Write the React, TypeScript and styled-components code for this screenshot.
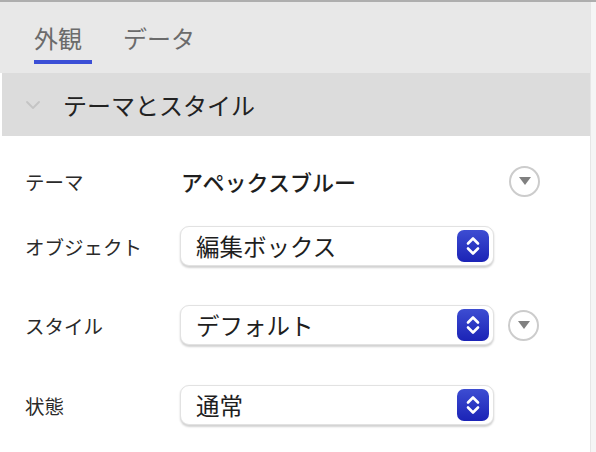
import styled, { createGlobalStyle } from 'styled-components';

const GlobalStyle = createGlobalStyle`
  html, body {
    margin: 0;
    padding: 0;
    background: #ffffff;
  }
  body {
    font-family: "Noto Sans CJK JP", "Noto Sans", sans-serif;
  }
`;

const Page = styled.div`
  display: flex;
  width: 596px;
  height: 452px;
  overflow: hidden;
  border-top: 2px solid #aeaeae;
  box-sizing: border-box;
`;

const Panel = styled.div`
  display: flex;
  flex-direction: column;
  width: 590px;
  background: #ffffff;
`;

const ScrollStrip = styled.div`
  width: 6px;
  border-left: 1px solid #e6e6e6;
  background: #f5f5f5;
  box-sizing: border-box;
`;

const TabBar = styled.div`
  display: flex;
  gap: 31px;
  height: 71px;
  padding-left: 34px;
  background: #e8e8e8;
  box-sizing: border-box;
`;

const Tab = styled.div<{ $active?: boolean }>`
  display: flex;
  flex-direction: column;
  align-items: flex-start;
  padding-top: 19px;
  font-size: 24px;
  line-height: 34px;
  color: #6b6b6b;

  &::after {
    content: '';
    display: block;
    width: 58px;
    height: 4px;
    margin-top: 5px;
    background: ${(p) => (p.$active ? '#3b4fd6' : 'transparent')};
  }
`;

const SectionHeader = styled.div`
  display: flex;
  align-items: center;
  gap: 22px;
  height: 63px;
  margin-left: 2px;
  padding-left: 23px;
  background: #dcdcdc;
  font-size: 24px;
  color: #222222;
`;

const Form = styled.div`
  display: flex;
  flex-direction: column;
  padding-left: 25px;
`;

const Row = styled.div<{ $mt: number }>`
  display: flex;
  align-items: center;
  height: 40px;
  margin-top: ${(p) => p.$mt}px;
`;

const Label = styled.div`
  width: 155px;
  font-size: 19.5px;
  color: #2a2a2a;
`;

const ValueText = styled.div`
  width: 314px;
  font-size: 22px;
  font-weight: 500;
  color: #1e1e1e;
  padding-left: 1px;
`;

const Select = styled.div`
  display: flex;
  align-items: center;
  justify-content: space-between;
  width: 314px;
  height: 40px;
  padding: 0 4px 0 15px;
  box-sizing: border-box;
  border: 1px solid #e2e2e2;
  border-radius: 9px;
  background: #ffffff;
  box-shadow: 0 1.5px 2px rgba(0, 0, 0, 0.18);
  font-size: 23.5px;
  color: #1e1e1e;
`;

const Stepper = styled.div`
  display: flex;
  align-items: center;
  justify-content: center;
  width: 32px;
  height: 32px;
  border-radius: 7px;
  background: linear-gradient(#3d4dd2, #1b23b6);
`;

const CircleButton = styled.div`
  display: flex;
  align-items: center;
  justify-content: center;
  width: 31px;
  height: 31px;
  margin-left: 14px;
  border: 2px solid #cccccc;
  border-radius: 50%;
  box-sizing: border-box;
`;

const Chevrons = () => (
  <svg width="32" height="32" viewBox="0 0 32 32">
    <path d="M11 13.5 L16 8.5 L21 13.5" fill="none" stroke="#fff" strokeWidth="2.6" strokeLinecap="round" strokeLinejoin="round" />
    <path d="M11 18.5 L16 23.5 L21 18.5" fill="none" stroke="#fff" strokeWidth="2.6" strokeLinecap="round" strokeLinejoin="round" />
  </svg>
);

const DownTriangle = () => (
  <svg width="14" height="10" viewBox="0 0 14 10">
    <path d="M1 1 L13 1 L7 9 Z" fill="#808080" />
  </svg>
);

const Caret = () => (
  <svg width="16" height="10" viewBox="0 0 16 10">
    <path d="M2 2 L8 8 L14 2" fill="none" stroke="#c4c4c4" strokeWidth="1.8" strokeLinecap="round" strokeLinejoin="round" />
  </svg>
);

const SelectBox = ({ value }: { value: string }) => (
  <Select>
    <span>{value}</span>
    <Stepper>
      <Chevrons />
    </Stepper>
  </Select>
);

const App = () => {
  return (
    <>
      <GlobalStyle />
      <Page>
        <Panel>
          <TabBar>
            <Tab $active>外観</Tab>
            <Tab>データ</Tab>
          </TabBar>
          <SectionHeader>
            <Caret />
            <span>テーマとスタイル</span>
          </SectionHeader>
          <Form>
            <Row $mt={25}>
              <Label>テーマ</Label>
              <ValueText>アペックスブルー</ValueText>
              <CircleButton>
                <DownTriangle />
              </CircleButton>
            </Row>
            <Row $mt={25}>
              <Label>オブジェクト</Label>
              <SelectBox value="編集ボックス" />
            </Row>
            <Row $mt={39}>
              <Label>スタイル</Label>
              <SelectBox value="デフォルト" />
              <CircleButton>
                <DownTriangle />
              </CircleButton>
            </Row>
            <Row $mt={40}>
              <Label>状態</Label>
              <SelectBox value="通常" />
            </Row>
          </Form>
        </Panel>
        <ScrollStrip />
      </Page>
    </>
  );
};

export default App;
